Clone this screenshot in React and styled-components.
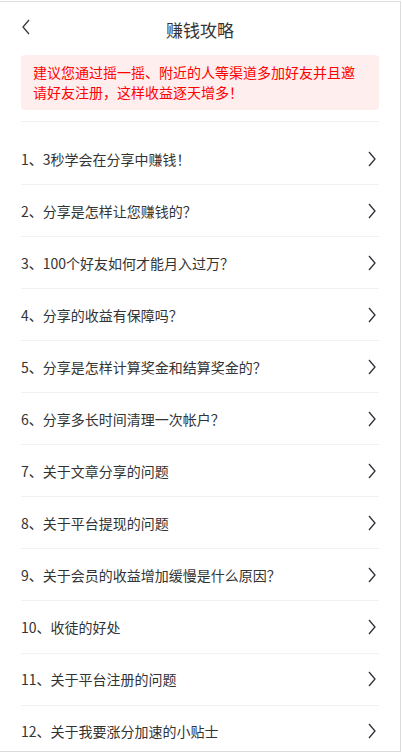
import React, {useState} from 'react'
import styled, {createGlobalStyle} from 'styled-components'

const Global = createGlobalStyle`
body {
  margin: 0;
  background: #fff;
  font-family: "Microsoft YaHei", "Noto Sans CJK SC", "Liberation Sans", sans-serif;
  text-spacing-trim: space-all;
}
`

const Page = styled.div`
width: 401px;
height: 751px;
box-sizing: border-box;
margin-top: 1px;
border-top: 1px solid #dcdcdc;
border-right: 1px solid #dcdcdc;
border-bottom: 1px solid #dcdcdc;
background: #fff;
overflow: hidden;
`

const Header = styled.div`
position: relative;
height: 53px;
display: flex;
align-items: center;
justify-content: center;
`

const Title = styled.h1`
margin: 0;
font-size: 17px;
font-weight: normal;
color: #333;
margin-top: 1px;
`

const Back = styled.button`
position: absolute;
left: 14px;
top: 12px;
width: 24px;
height: 26px;
padding: 0;
border: none;
background: none;
display: flex;
align-items: center;
justify-content: center;
`

const Top = styled.div`
margin: 0 21px;
padding-bottom: 11px;
border-bottom: 1px solid #f2f2f2;
`

const Notice = styled.div`
background: #ffeeee;
border-radius: 4px;
padding: 7px 12px 8px 12px;
color: #ff0000;
font-size: 14px;
line-height: 20px;
`

const List = styled.div`
margin: 11px 21px 0 21px;
`

const Row = styled.div`
height: 51px;
display: flex;
align-items: center;
justify-content: space-between;
border-bottom: 1px solid #f2f2f2;
font-size: 14px;
color: #333;
cursor: pointer;
&:nth-child(n+8) { height: 51.2px; }
`

const Arrow = styled.span`
display: flex;
margin-right: 2px;
`

function Chevron({left}) {
  return (
    <svg width="10" height="16" viewBox="0 0 10 16">
      <path d={left ? "M8 1 L2 8 L8 15" : "M2 1 L8 8 L2 15"} fill="none" stroke={left ? "#3a3a3a" : "#2f2f3a"} strokeWidth="1.3" />
    </svg>
  )
}

export default function App() {
  const [items] = useState([
    '1、3秒学会在分享中赚钱！',
    '2、分享是怎样让您赚钱的？',
    '3、100个好友如何才能月入过万？',
    '4、分享的收益有保障吗？',
    '5、分享是怎样计算奖金和结算奖金的？',
    '6、分享多长时间清理一次帐户？',
    '7、关于文章分享的问题',
    '8、关于平台提现的问题',
    '9、关于会员的收益增加缓慢是什么原因？',
    '10、收徒的好处',
    '11、关于平台注册的问题',
    '12、关于我要涨分加速的小贴士',
  ])

  return (
    <Page>
      <Global />
      <Header>
        <Back><Chevron left /></Back>
        <Title>赚钱攻略</Title>
      </Header>
      <Top>
        <Notice>建议您通过摇一摇、附近的人等渠道多加好友并且邀请好友注册，这样收益逐天增多！</Notice>
      </Top>
      <List>
        {items.map(t =>
          <Row key={t}>
            <span>{t}</span>
            <Arrow><Chevron /></Arrow>
          </Row>
        )}
      </List>
    </Page>
  )
}
